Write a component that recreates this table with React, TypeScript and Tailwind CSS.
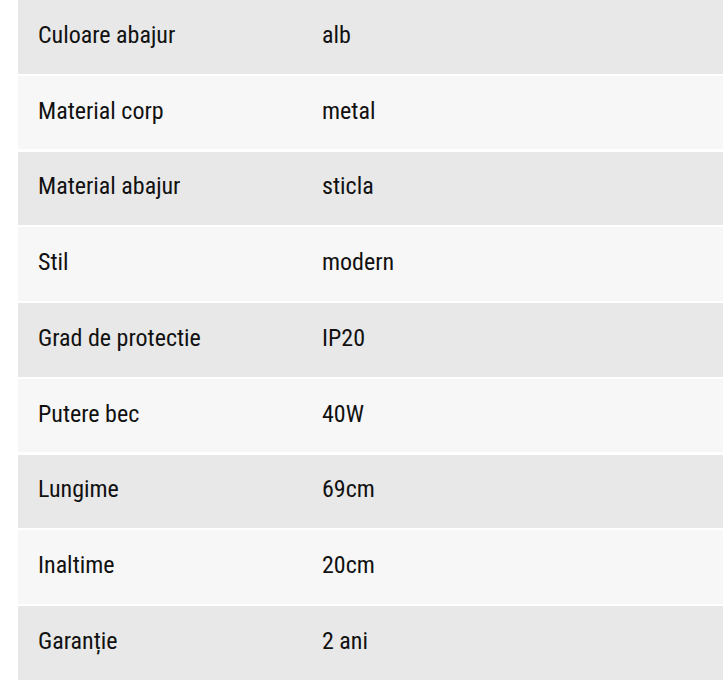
const rows: [string, string][] = [
  ['Culoare abajur', 'alb'],
  ['Material corp', 'metal'],
  ['Material abajur', 'sticla'],
  ['Stil', 'modern'],
  ['Grad de protectie', 'IP20'],
  ['Putere bec', '40W'],
  ['Lungime', '69cm'],
  ['Inaltime', '20cm'],
  ['Garanție', '2 ani'],
];

export default function App() {
  return (
    <div className="min-h-[699px] w-[723px] bg-white pl-[18px] font-['Roboto',sans-serif] text-[#111111] [font-stretch:75%] [font-weight:370]">
      <div className="flex flex-col gap-[2.25px]">
        {rows.map(([label, value], i) => (
          <div
            key={label}
            className={`flex h-[73.5px] items-center pb-[4px] text-[24px] ${i % 2 === 0 ? 'bg-[#e8e8e8]' : 'bg-[#f7f7f7]'}`}
          >
            <span className="w-[304px] shrink-0 pl-[20px]">{label}</span>
            <span>{value}</span>
          </div>
        ))}
      </div>
    </div>
  );
}
